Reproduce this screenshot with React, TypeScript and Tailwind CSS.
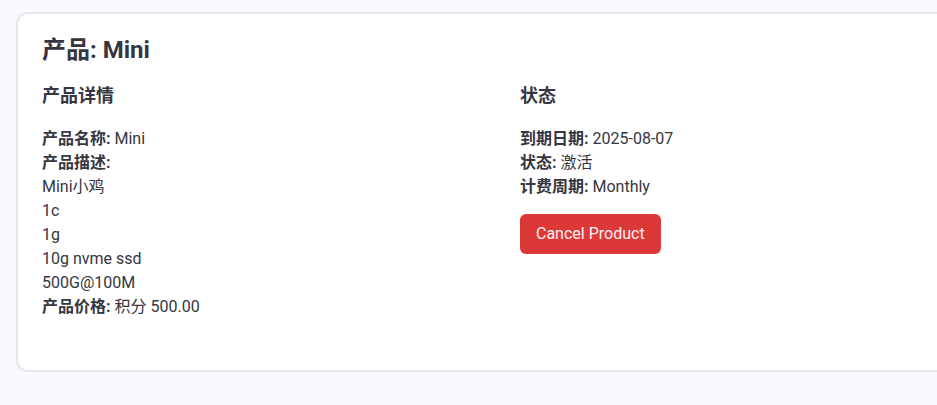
import React from "react";

const fontStack = {
  fontFamily: 'Roboto, "Noto Sans CJK SC", sans-serif',
};

const Row = ({ label, value }: { label: string; value?: string }) => (
  <p>
    <span className="font-bold">{label}:</span>
    {value ? ` ${value}` : ""}
  </p>
);

export default function App() {
  return (
    <div
      className="min-h-screen w-full overflow-hidden bg-[#f9fafd] pt-3 pl-4 text-[#363641]"
      style={fontStack}
    >
      {/* Card: wider than viewport, right edge cut off */}
      <div className="w-[976px] rounded-xl border-2 border-[#e6e8ee] bg-white px-6 pt-5 pb-[51px]">
        <h1 className="mb-4 text-2xl font-bold">产品: Mini</h1>

        <div className="grid grid-cols-2 gap-8">
          {/* 产品详情 */}
          <div>
            <h2 className="mb-[17px] text-lg font-semibold">产品详情</h2>
            <div className="text-base leading-6">
              <Row label="产品名称" value="Mini" />
              <Row label="产品描述" />
              <p>Mini小鸡</p>
              <p>1c</p>
              <p>1g</p>
              <p>10g nvme ssd</p>
              <p>500G@100M</p>
              <Row label="产品价格" value="积分 500.00" />
            </div>
          </div>

          {/* 状态 */}
          <div>
            <h2 className="mb-[17px] text-lg font-semibold">状态</h2>
            <div className="text-base leading-6">
              <Row label="到期日期" value="2025-08-07" />
              <Row label="状态" value="激活" />
              <Row label="计费周期" value="Monthly" />
            </div>
            <button className="mt-[15px] rounded-md bg-[#dc3838] px-4 py-2 text-base text-[#fdf2f2]">
              Cancel Product
            </button>
          </div>
        </div>
      </div>
    </div>
  );
}
